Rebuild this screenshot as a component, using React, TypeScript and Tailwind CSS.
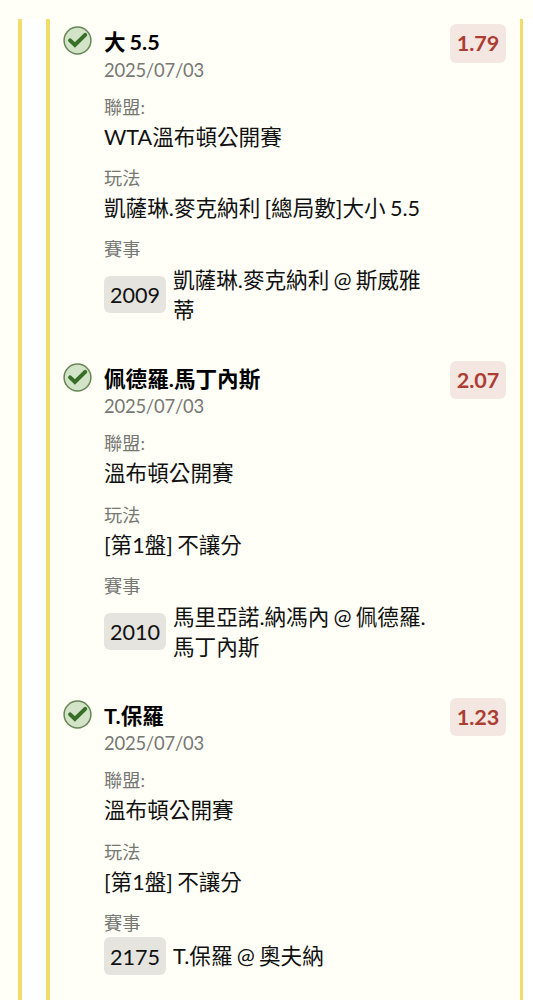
type Bet = {
  pick: string;
  date: string;
  league: string;
  market: string;
  code: string;
  match: string[];
  odds: string;
};

const bets: Bet[] = [
  {
    pick: "大 5.5",
    date: "2025/07/03",
    league: "WTA溫布頓公開賽",
    market: "凱薩琳.麥克納利 [總局數]大小 5.5",
    code: "2009",
    match: ["凱薩琳.麥克納利 @ 斯威雅", "蒂"],
    odds: "1.79",
  },
  {
    pick: "佩德羅.馬丁內斯",
    date: "2025/07/03",
    league: "溫布頓公開賽",
    market: "[第1盤] 不讓分",
    code: "2010",
    match: ["馬里亞諾.納馮內 @ 佩德羅.", "馬丁內斯"],
    odds: "2.07",
  },
  {
    pick: "T.保羅",
    date: "2025/07/03",
    league: "溫布頓公開賽",
    market: "[第1盤] 不讓分",
    code: "2175",
    match: ["T.保羅 @ 奧夫納"],
    odds: "1.23",
  },
];

function WonIcon() {
  return (
    <svg className="mt-[3px] block h-[29px] w-[29px] shrink-0" viewBox="0 0 29 29" fill="none">
      <circle cx="14.5" cy="14.5" r="13.4" fill="#d2e3c7" stroke="#668656" strokeWidth="1.5" />
      <path d="M7.1 14.4 11.9 19 22.2 8.9" stroke="#376f27" strokeWidth="4" strokeLinecap="round" strokeLinejoin="miter" />
    </svg>
  );
}

function Field({ label, value }: { label: string; value: string }) {
  return (
    <div className="h-[71.4px]">
      <div className="h-[27px] text-[18.2px] leading-[25px] text-[#777774]">{label}</div>
      <div className="leading-[30px]">{value}</div>
    </div>
  );
}

function BetItem({ bet }: { bet: Bet }) {
  return (
    <article className="flex h-[336.8px] shrink-0 pr-[14px] pl-[13px]">
      <WonIcon />
      <div className="ml-[12px] min-w-0 flex-1 whitespace-nowrap">
        <div className="h-[34.6px] pt-[4px] leading-[30px] font-bold text-black">{bet.pick}</div>
        <div className="h-[37px] text-[18.4px] leading-[25px] tracking-[-0.2px] text-[#777774]">{bet.date}</div>
        <Field label="聯盟:" value={bet.league} />
        <Field label="玩法" value={bet.market} />
        <div className="h-[25px] text-[18.2px] leading-[25px] text-[#777774]">賽事</div>
        <div className="mt-[1.4px] flex items-center">
          <span className="flex h-[37.5px] w-[62px] shrink-0 items-center justify-center rounded-[6px] bg-[#e5e4df] pt-[2px]">
            {bet.code}
          </span>
          <div className="ml-[7px] pt-px leading-[30.4px]">
            {bet.match.map((line) => (
              <div key={line}>{line}</div>
            ))}
          </div>
        </div>
      </div>
      <span className="mt-px flex h-[38.5px] w-[56px] shrink-0 items-center justify-center rounded-[6px] bg-[#f4e7e1] font-bold text-[#ad3c32]">
        {bet.odds}
      </span>
    </article>
  );
}

export default function App() {
  return (
    <main className="flex h-[1000px] w-[533px] overflow-hidden bg-[#fffff8] pt-[19px] font-['Lato','Noto_Sans_CJK_TC',sans-serif] text-[21.6px] [word-spacing:-1.3px] text-[#111] antialiased">
      <div className="w-[18px] shrink-0" />
      <div className="flex min-w-0 flex-1 border-l-4 border-[#f2dd6b] bg-white pl-[24px]">
        <section className="flex w-[477px] shrink-0 flex-col border-r-[3px] border-l-4 border-[#f2dd6b] bg-[#fffff8] pt-[4px]">
          {bets.map((bet) => (
            <BetItem key={bet.code} bet={bet} />
          ))}
        </section>
      </div>
    </main>
  );
}
